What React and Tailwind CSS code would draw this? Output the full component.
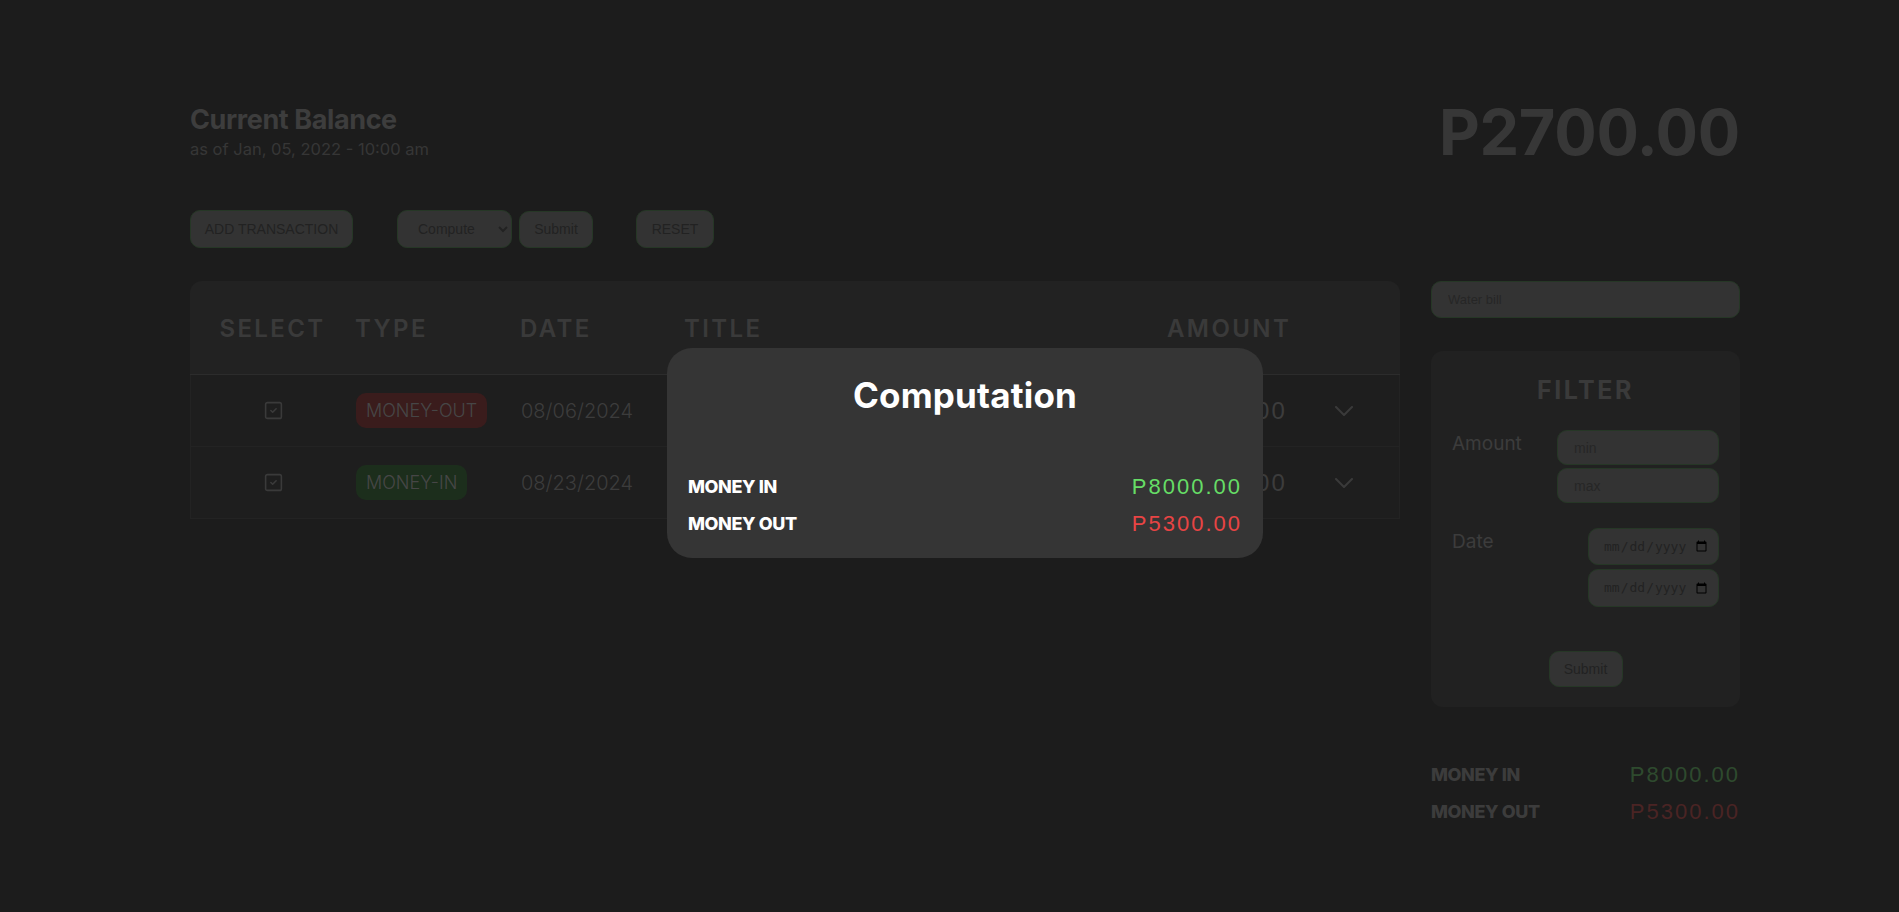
import { SquareCheck } from 'lucide-react';

const poppins = "font-['Inter','Noto_Sans',sans-serif]";
const arial = "font-['Liberation_Sans',Arial,sans-serif]";

// titles sit under the computation modal, so they are left blank here
const rows = [
    { type: 'MONEY-OUT', date: '08/06/2024', amount: 'P5300.00' },
    { type: 'MONEY-IN', date: '08/23/2024', amount: 'P8000.00' },
];

const Chevron = () => (
    <svg width="18" height="10" viewBox="0 0 18 10" fill="none" stroke="#919191" strokeWidth="2" strokeLinecap="round" strokeLinejoin="round">
        <polyline points="1,1 9,9 17,1" />
    </svg>
);

const cols = "grid grid-cols-[165px_165px_164px_483px_120px_1fr] items-center";
const field = "rounded-[10px] bg-[#808080] border border-[#5f8a5f]";

const App = () => {
    return (
        <div className={`relative h-[912px] overflow-hidden bg-[#464646] ${poppins}`}>
            <div className="ml-[190px] w-[1550px] pt-[103px]">
                {/* Balance header */}
                <div className="flex justify-between items-start">
                    <div>
                        <h2 className="text-[27px] leading-[34px] font-bold tracking-[-0.4px] text-[#989898]">Current Balance</h2>
                        <p className="text-[16.5px] leading-6 text-[#878787]">as of Jan, 05, 2022 - 10:00 am</p>
                    </div>
                    <div className="text-[63px] leading-none font-bold tracking-[-0.3px] text-[#8a8a8a] -mt-[2px]">P2700.00</div>
                </div>

                {/* Actions */}
                <div className={`flex items-center mt-[46px] text-[14px] text-[#555] ${arial}`}>
                    <button className={`w-[163px] h-[38px] ${field}`}>ADD TRANSACTION</button>
                    <select className={`ml-[44px] w-[115px] h-[38px] ${field} pl-4 pr-2 text-[#555]`}>
                        <option>Compute</option>
                    </select>
                    <button className={`ml-[7px] w-[74px] h-[37px] ${field}`}>Submit</button>
                    <button className={`ml-[43px] w-[78px] h-[38px] ${field}`}>RESET</button>
                </div>

                <div className="flex gap-[31px] mt-[33px]">
                    {/* Transactions table */}
                    <div className="w-[1210px]">
                        <div className={`${cols} h-[94px] pt-[2px] rounded-t-xl bg-[#555555] border-b border-[#6e6e6e] text-[24px] font-semibold tracking-[0.1em] text-[#919191]`}>
                            <div className="text-center">SELECT</div>
                            <div>TYPE</div>
                            <div>DATE</div>
                            <div>TITLE</div>
                            <div>AMOUNT</div>
                            <div></div>
                        </div>
                        {rows.map((r) => (
                            <div key={r.date} className={`${cols} h-[72px] bg-[#4b4b4b] border-x border-b border-[#585858] text-[20px] font-light text-[#969696]`}>
                                <div className="flex justify-center">
                                    <SquareCheck size={21} strokeWidth={1.8} color="#919191" />
                                </div>
                                <div>
                                    <span className={`inline-block h-[35px] leading-[35px] px-[10px] rounded-[10px] text-[18px] text-[#b0b0b0] ${r.type === 'MONEY-OUT' ? 'bg-[#914646]' : 'bg-[#467346]'}`}>
                                        {r.type}
                                    </span>
                                </div>
                                <div>{r.date}</div>
                                <div></div>
                                <div className={`text-[24px] font-normal tracking-[2px] ${arial}`}>{r.amount}</div>
                                <div className="flex justify-center"><Chevron /></div>
                            </div>
                        ))}
                    </div>

                    {/* Sidebar */}
                    <div className="w-[309px]">
                        <input
                            placeholder="Water bill"
                            className={`w-full h-[37px] ${field} px-4 text-[13px] placeholder:text-[#5f5f5f] ${arial}`}
                        />

                        <div className="mt-[33px] h-[356px] rounded-xl bg-[#535353] px-[21px] pt-[24px]">
                            <h3 className="text-center text-[25px] leading-[30px] font-bold tracking-[0.1em] text-[#919191]">FILTER</h3>

                            <div className="flex justify-between mt-[25px]">
                                <span className="text-[19px] leading-[28px] text-[#969696]">Amount</span>
                                <div className="flex flex-col gap-[3px] w-[162px]">
                                    <input placeholder="min" className={`h-[35px] ${field} px-4 text-[14px] placeholder:text-[#5f5f5f] ${arial}`} />
                                    <input placeholder="max" className={`h-[35px] ${field} px-4 text-[14px] placeholder:text-[#5f5f5f] ${arial}`} />
                                </div>
                            </div>

                            <div className="flex justify-between mt-[25px]">
                                <span className="text-[19px] leading-[28px] text-[#969696]">Date</span>
                                <div className="flex flex-col gap-[4px] w-[131px]">
                                    <input type="date" className={`h-[37px] ${field} pl-[14px] pr-[8px] text-[13px] text-[#555] font-['DejaVu_Sans_Mono',monospace]`} />
                                    <input type="date" className={`h-[38px] ${field} pl-[14px] pr-[8px] text-[13px] text-[#555] font-['DejaVu_Sans_Mono',monospace]`} />
                                </div>
                            </div>

                            <div className="flex justify-center mt-[44px]">
                                <button className={`w-[74px] h-[36px] ${field} text-[14px] text-[#555] ${arial}`}>Submit</button>
                            </div>
                        </div>

                        <div className="mt-[52px] flex flex-col gap-[7px]">
                            <div className="flex justify-between items-center h-[30px]">
                                <span className="text-[18px] font-extrabold tracking-[-0.4px] text-[#969696]">MONEY IN</span>
                                <span className={`text-[22px] tracking-[2px] text-[#73b973] ${arial}`}>P8000.00</span>
                            </div>
                            <div className="flex justify-between items-center h-[30px]">
                                <span className="text-[18px] font-extrabold tracking-[-0.4px] text-[#969696]">MONEY OUT</span>
                                <span className={`text-[22px] tracking-[2px] text-[#b95a5a] ${arial}`}>P5300.00</span>
                            </div>
                        </div>
                    </div>
                </div>
            </div>

            {/* Modal overlay */}
            <div className="fixed inset-0 bg-black/60"></div>
            <div className="fixed left-[667px] top-[348px] w-[596px] h-[210px] rounded-[25px] bg-[#353535] px-[21px] pt-[27px]">
                <h2 className="text-center text-[35px] leading-[40px] font-bold tracking-[0.2px] text-white">Computation</h2>
                <div className="mt-[56px] flex flex-col gap-[7px]">
                    <div className="flex justify-between items-center h-[30px]">
                        <span className="text-[18px] font-extrabold tracking-[-0.4px] text-white">MONEY IN</span>
                        <span className={`text-[22px] tracking-[2px] text-[#66dd66] ${arial}`}>P8000.00</span>
                    </div>
                    <div className="flex justify-between items-center h-[30px]">
                        <span className="text-[18px] font-extrabold tracking-[-0.4px] text-white">MONEY OUT</span>
                        <span className={`text-[22px] tracking-[2px] text-[#e84444] ${arial}`}>P5300.00</span>
                    </div>
                </div>
            </div>
        </div>
    );
};

export default App;
